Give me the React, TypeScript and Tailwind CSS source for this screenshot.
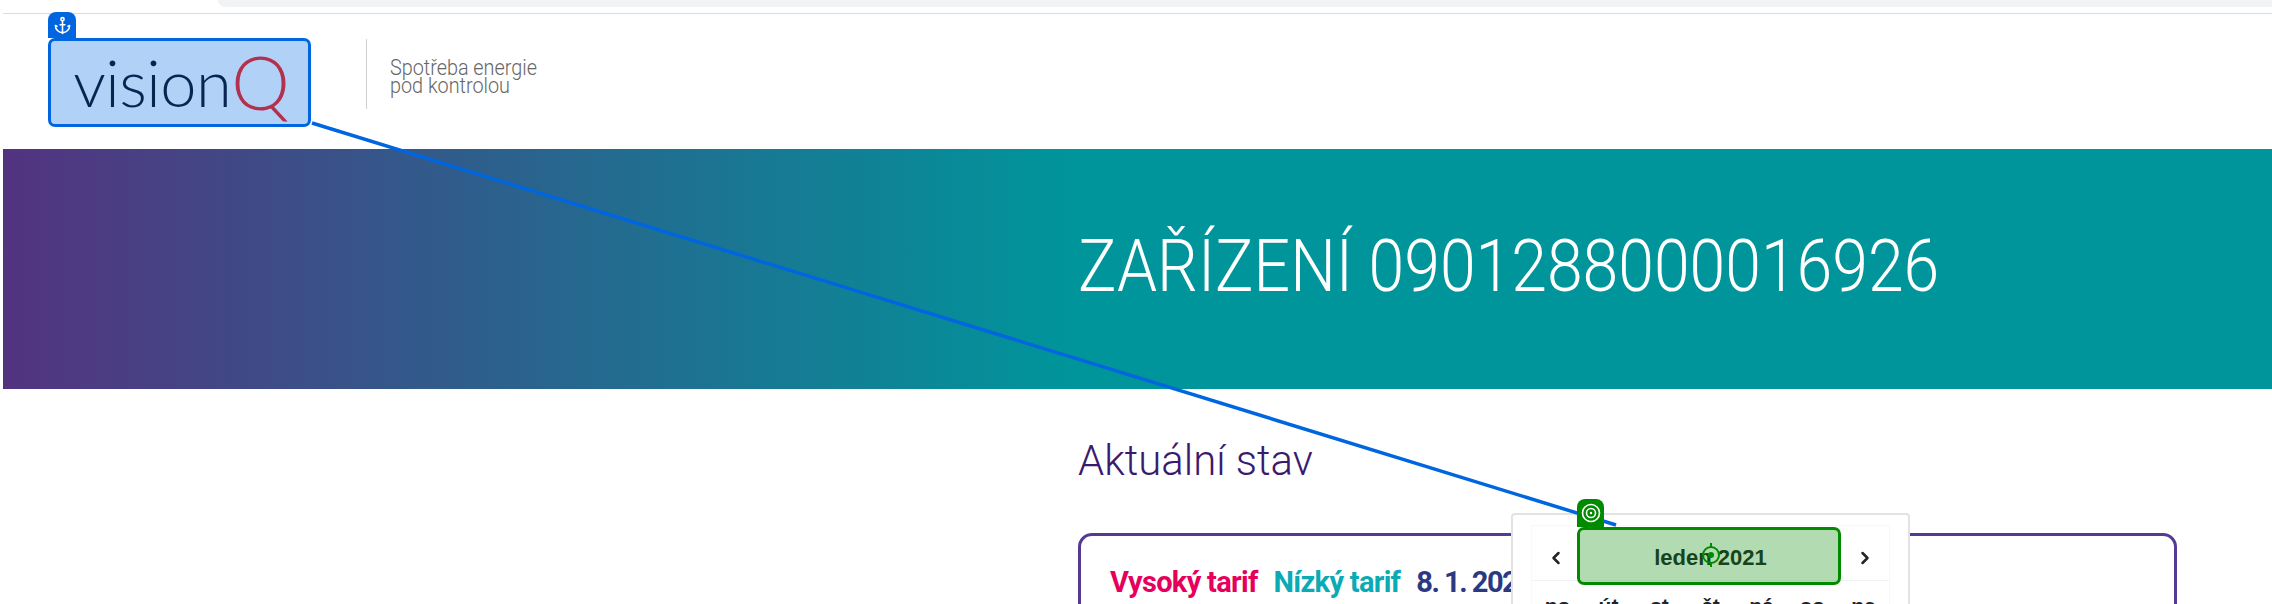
import React from 'react';
import { Anchor, ChevronLeft, ChevronRight } from 'lucide-react';

const thin = "font-['Roboto',sans-serif] font-light";
const weekDays = ['po', 'út', 'st', 'čt', 'pá', 'so', 'ne'];

const Logo = () => (
  <div className="relative flex h-[89px] w-[263px] items-end justify-center rounded-[7px] pb-[9px] pl-[4px] font-['Lato',sans-serif] font-light">
    <span className="text-[65px] leading-[72px] tracking-[-0.5px] text-[#0a0a14]">vision</span>
    <span className="text-[74px] leading-[72px] text-[#ff1a10]">Q</span>
    {/* anchor overlay */}
    <div className="absolute inset-0 rounded-[7px] border-[3px] border-[#0066e0] bg-[#0066e0]/30" />
    <div className="absolute top-[-26px] left-0 flex h-[26px] w-[28px] items-center justify-center rounded-t-[8px] bg-[#0066e0] text-white">
      <Anchor size={19} strokeWidth={2} />
    </div>
  </div>
);

const CalendarPopup = () => (
  <div className="absolute top-[513px] left-[1511px] h-[120px] w-[399px] rounded-[4px] border-2 border-[#e2e2e2] bg-white px-[18px] pt-[10px]">
    <div className="border border-[#f8f8f8]">
      <div className="flex h-[55px] items-center justify-between border-b border-[#f3f3f3] px-[14px] pt-[9px] text-[#212529]">
        <ChevronLeft size={20} strokeWidth={3} />
        <span className="text-[22px] font-bold font-['Liberation_Sans',sans-serif]">leden 2021</span>
        <ChevronRight size={20} strokeWidth={3} />
      </div>
      <div className="grid grid-cols-7 pt-[9px] text-center text-[21px] font-bold text-[#212529] font-['Liberation_Sans',sans-serif]">
        {weekDays.map((d) => (
          <span key={d}>{d}</span>
        ))}
      </div>
    </div>
  </div>
);

const TargetOverlay = () => (
  <div className="absolute top-[527px] left-[1577px] h-[58px] w-[264px] rounded-[7px] border-[3px] border-[#008a00] bg-[#008a00]/30">
    <div className="absolute top-[-31px] left-[-3px] flex h-[28px] w-[27px] items-center justify-center rounded-t-[8px] bg-[#008a00]">
      <svg width="20" height="20" viewBox="0 0 20 20" fill="none" stroke="white" strokeWidth="1.6">
        <circle cx="10" cy="10" r="8.5" />
        <circle cx="10" cy="10" r="4.5" />
        <circle cx="10" cy="10" r="1.2" fill="white" stroke="none" />
      </svg>
    </div>
    <svg className="absolute top-[13px] left-[120px]" width="22" height="24" viewBox="0 0 22 24" fill="none" stroke="#008a00" strokeWidth="2">
      <circle cx="11" cy="12" r="8" />
      <circle cx="11" cy="12" r="3" fill="#008a00" stroke="none" />
      <path d="M11 0v4M11 20v4" />
    </svg>
  </div>
);

export default function App() {
  return (
    <div className="relative h-[604px] w-[2272px] overflow-hidden bg-white">
      {/* browser edge */}
      <div className="ml-[218px] h-[7px] rounded-bl-[14px] bg-[#f1f3f4]" />
      <div className="mt-[6px] ml-[3px] h-[1px] bg-[#dadce0]" />

      <header className="ml-[48px] flex h-[135px] items-start pt-[24px]">
        <Logo />
        <div className="mt-[1px] ml-[55px] h-[70px] w-[1px] bg-[#cfcfcf]" />
        <p className={`mt-[21px] ml-[23px] origin-left scale-x-[0.9] text-[22px] leading-[18px] text-[#666] ${thin}`}>
          Spotřeba energie
          <br />
          pod kontrolou
        </p>
      </header>

      <section className="ml-[3px] h-[240px] bg-[linear-gradient(90deg,#533380_0%,#00959b_47%)] pt-[78px] pl-[1075px]">
        <h1 className={`origin-left scale-x-[0.893] text-[72px] leading-[80px] whitespace-nowrap text-white ${thin}`}>
          ZAŘÍZENÍ 0901288000016926
        </h1>
      </section>

      <main className="mr-[95px] ml-[1078px]">
        <h2 className={`mt-[47px] origin-left scale-x-[0.975] text-[43px] leading-[48px] text-[#3a1a6e] ${thin}`}>Aktuální stav</h2>
        <div className="mt-[49px] h-[120px] rounded-[14px] border-[3px] border-[#553a94] pt-[28px] pl-[29px]">
          <div className="flex gap-[16px] text-[29px] leading-[36px] font-bold tracking-[-0.7px] font-['Roboto',sans-serif]">
            <span className="text-[#e6005c]">Vysoký tarif</span>
            <span className="text-[#0baab5]">Nízký tarif</span>
            <span className="tracking-[-1.5px] text-[#2a3a82]">8. 1. 2021</span>
          </div>
        </div>
      </main>

      <CalendarPopup />

      {/* connector between anchor and target */}
      <svg className="pointer-events-none absolute inset-0" width="2272" height="604" fill="none">
        <line x1="312" y1="123" x2="1616" y2="525" stroke="#0066e0" strokeWidth="3.5" />
      </svg>

      <TargetOverlay />
    </div>
  );
}
